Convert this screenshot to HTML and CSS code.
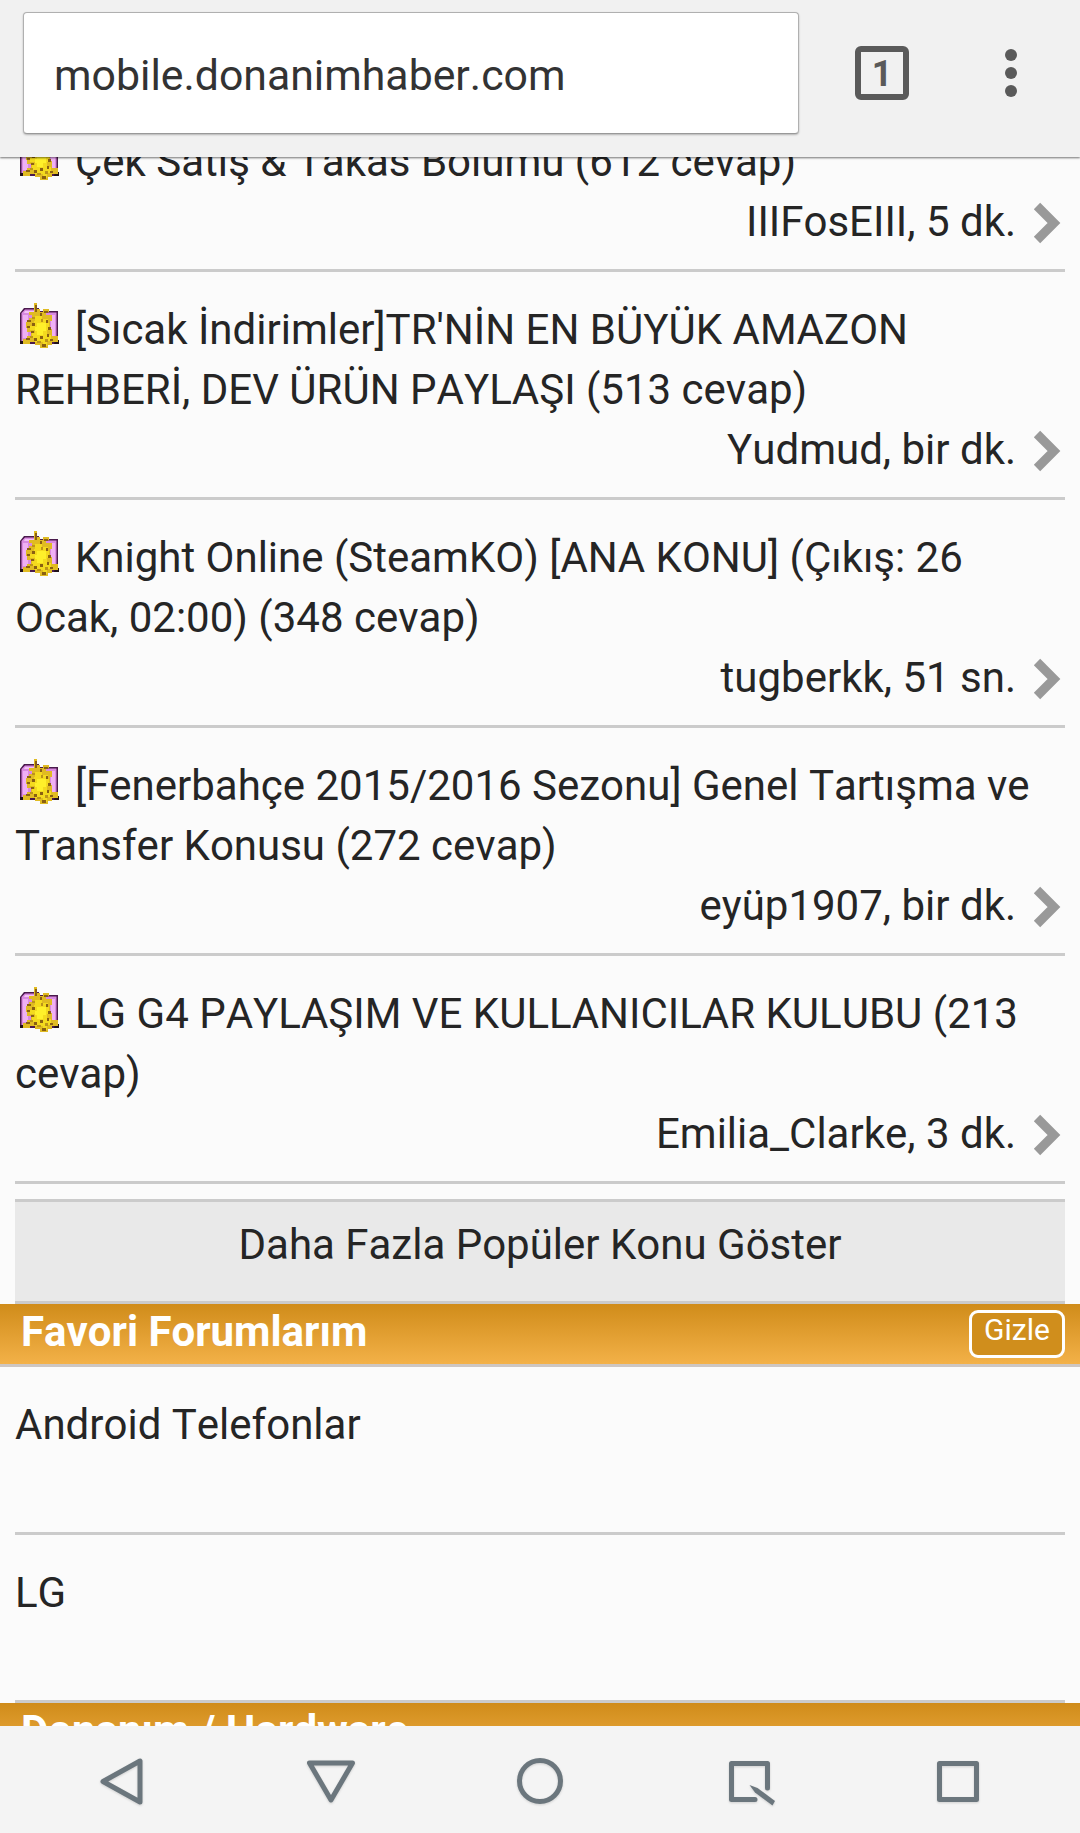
FILE: index.html
```html
<!DOCTYPE html>
<html lang="tr">
  <head>
    <meta charset="UTF-8" />
    <meta name="viewport" content="width=device-width, initial-scale=1.0" />
    <title>DonanımHaber Mobil</title>
    <link rel="stylesheet" href="styles.css" />
  </head>
  <body>
    <!-- Shared icons -->
    <svg class="icon-defs" width="0" height="0">
      <symbol id="hot" viewBox="0 0 45 50">
        <path d="M5 13l4-5h15v3h19v32h-3v1H5z" fill="#4a1a4c" />
        <path d="M6.500 13L10 9.500h13v3h18.500V41h-35z" fill="#d98ae0" />
        <path d="M8 15h5v23H8zM36 15h4v23h-4z" fill="#efb0f4" />
        <path d="M10 11h12v2H9z" fill="#f3c2f6" />
        <path d="M40 40h4v4h-5zM5 41h5v3H5z" fill="#201018" />
        <path d="M19 3h3v6h3v3h3V9h6v3h-3v3h6v6h-2v8h2v7h6v6h-6v3h-4v3h-8v-3h-5v-3h-5v2H8v-5h4v-3h4v-4h-4v-4h-1v-6h3v-4h3v-3h-3v-3h5z" fill="#e0bb22" />
        <path d="M20 16h7v3h6v4h1v7h-2v5h4v6h-4v5h-4v-4h-8v-4h-3v-5h3v-3h-5v-4h4v-5h1z" fill="#f4da1e" />
        <path d="M22 23h9v8h-3v4h-6v-4h-2v-4h2z" fill="#fff02a" />
        <g fill="#8a6012">
          <path d="M20 5h2v7h-2zM29 11h4v2h-4zM25 13h2v3h-2zM12 20h4v2h-4zM17 23h3v3h-3zM12 26h3v2h-3z" />
          <path d="M33 27h3v3h-3zM31 20h2v3h-2zM16 31h3v2h-3zM11 38h4v2h-4zM19 38h3v3h-3zM25 36h3v3h-3zM32 34h2v3h-2zM27 44h4v3h-4zM35 39h3v2h-3z" />
        </g>
        <path d="M17 17h3v2h-3zM22 41h4v2h-4zM30 39h3v3h-3zM15 36h3v2h-3zM26 19h2v3h-2z" fill="#bd941a" />
      </symbol>
      <symbol id="arrow" viewBox="0 0 30 46">
        <path d="M5 6l17 17L5 40" fill="none" stroke="#999" stroke-width="9" stroke-linejoin="miter" />
      </symbol>
    </svg>

    <div class="screen">
      <header class="toolbar">
        <div class="url">mobile.donanimhaber.com</div>
        <div class="tabs">1</div>
        <div class="menu"><i></i><i></i><i></i></div>
      </header>

      <main class="page">
        <!-- Popüler konular -->
        <div class="topic first">
          <div class="title"><svg class="hot"><use href="#hot" /></svg> Çek Satış &amp; Takas Bölümü (612 cevap)</div>
          <div class="meta">IIIFosEIII, 5 dk.<svg class="arrow"><use href="#arrow" /></svg></div>
        </div>
        <div class="topic">
          <div class="title"><svg class="hot"><use href="#hot" /></svg> [Sıcak İndirimler]TR'NİN EN BÜYÜK AMAZON<br />REHBERİ, DEV ÜRÜN PAYLAŞI (513 cevap)</div>
          <div class="meta">Yudmud, bir dk.<svg class="arrow"><use href="#arrow" /></svg></div>
        </div>
        <div class="topic">
          <div class="title"><svg class="hot"><use href="#hot" /></svg> Knight Online (SteamKO) [ANA KONU] (Çıkış: 26<br />Ocak, 02:00) (348 cevap)</div>
          <div class="meta">tugberkk, 51 sn.<svg class="arrow"><use href="#arrow" /></svg></div>
        </div>
        <div class="topic">
          <div class="title"><svg class="hot"><use href="#hot" /></svg> [Fenerbahçe 2015/2016 Sezonu] Genel Tartışma ve<br />Transfer Konusu (272 cevap)</div>
          <div class="meta">eyüp1907, bir dk.<svg class="arrow"><use href="#arrow" /></svg></div>
        </div>
        <div class="topic">
          <div class="title"><svg class="hot"><use href="#hot" /></svg> LG G4 PAYLAŞIM VE KULLANICILAR KULUBU (213<br />cevap)</div>
          <div class="meta">Emilia_Clarke, 3 dk.<svg class="arrow"><use href="#arrow" /></svg></div>
        </div>
        <div class="more">Daha Fazla Popüler Konu Göster</div>

        <!-- Favori forumlar -->
        <div class="section">
          <h2>Favori Forumlarım</h2>
          <span class="hide-btn">Gizle</span>
        </div>
        <div class="forum">Android Telefonlar</div>
        <div class="forum">LG</div>

        <div class="section">
          <h2>Donanım / Hardware</h2>
        </div>
      </main>

      <nav class="navbar">
        <svg viewBox="0 0 60 60"><path d="M48 10v41L11 30.500z" /></svg>
        <svg viewBox="0 0 60 60"><path d="M8.500 12h43L30 49z" /></svg>
        <svg viewBox="0 0 60 60"><circle cx="30" cy="30" r="20.500" /></svg>
        <svg viewBox="0 0 60 60">
          <path d="M36 48.500H12.500v-36h36V37" />
          <path class="pen" d="M30.500 34l8 3 17.500 13-2.500 4.500L36 41.500z" />
        </svg>
        <svg viewBox="0 0 60 60"><path d="M11.500 12.500h37v36h-37z" /></svg>
      </nav>
    </div>
  </body>
</html>
```

FILE: styles.css
```css
* {
  box-sizing: border-box;
  margin: 0;
  padding: 0;
}

body {
  font-family: Roboto, "Noto Sans", sans-serif;
  font-size: 42px;
  font-kerning: none;
  line-height: 60px;
  color: #252525;
  background-color: #fbfbfb;
}

.icon-defs {
  display: block;
}

.screen {
  display: flex;
  flex-direction: column;
  height: 1833px;
  overflow: hidden;
}

/* Browser bar */
.toolbar {
  position: relative;
  z-index: 1;
  display: flex;
  flex: none;
  align-items: flex-start;
  height: 157px;
  padding: 12px 0 0 23px;
  background-color: #f1f1f1;
  box-shadow: 0 1px 2px rgba(0, 0, 0, 0.55);
}

.url {
  width: 776px;
  height: 122px;
  padding-left: 30px;
  font-size: 42.8px;
  line-height: 125px;
  color: #333;
  background-color: #fff;
  border: 1px solid #b0b0b0;
  border-bottom-color: #999;
  border-radius: 4px;
  box-shadow: 0 1px 2px rgba(0, 0, 0, 0.25);
}

.tabs {
  width: 54px;
  height: 54px;
  margin: 34px 0 0 56px;
  border: 6px solid #5a5a5a;
  border-radius: 6px;
  font-size: 36px;
  font-weight: 700;
  line-height: 44px;
  text-align: center;
  color: #5a5a5a;
}

.menu {
  display: flex;
  flex-direction: column;
  gap: 6px;
  margin: 37px 0 0 96px;
}

.menu i {
  width: 12px;
  height: 12px;
  border-radius: 50%;
  background-color: #5a5a5a;
}

/* Page */
.page {
  flex: 1;
  min-height: 0;
  overflow: hidden;
}

.topic {
  height: 228px;
  margin: 0 15px;
  padding-top: 28px;
  border-bottom: 3px solid #cbcbcb;
}

.topic.first {
  height: 168px;
  margin-top: -53px;
}

.title {
  white-space: nowrap;
}

.hot {
  width: 45px;
  height: 50px;
  margin-right: 4.5px;
  vertical-align: -6px;
}

.meta {
  display: flex;
  justify-content: flex-end;
  align-items: flex-start;
}

.arrow {
  width: 30px;
  height: 46px;
  margin: 8px 3px 0 16px;
}

.more {
  height: 105px;
  margin: 15px 15px 0;
  padding-top: 13px;
  text-align: center;
  background-color: #e9e9e9;
  border-top: 3px solid #cbcbcb;
  border-bottom: 3px solid #cbcbcb;
}

.section {
  display: flex;
  justify-content: space-between;
  height: 63px;
  padding: 0 15px 0 21px;
  color: #fff;
  background: linear-gradient(#d08c1a, #f3b148) padding-box;
  border-bottom: 3px solid #cdc6c2;
}

.section h2 {
  font-size: 42px;
  line-height: 55px;
}

.hide-btn {
  width: 96px;
  height: 48px;
  margin-top: 6px;
  border: 3px solid #fff;
  border-radius: 9px;
  font-size: 30px;
  line-height: 34px;
  text-align: center;
  background-color: #d08e1c;
}

.forum {
  height: 168px;
  margin: 0 15px;
  padding-top: 28px;
  border-bottom: 3px solid #cbcbcb;
}

/* System buttons */
.navbar {
  display: flex;
  flex: none;
  justify-content: space-around;
  height: 107px;
  padding: 25px 17px 0;
  background-color: #f4f4f4;
}

.navbar svg {
  width: 60px;
  height: 60px;
  fill: none;
  stroke: #6b767d;
  stroke-width: 5;
  stroke-linejoin: round;
  stroke-linecap: round;
  filter: drop-shadow(0 1px 1px rgba(0, 0, 0, 0.15));
}

.navbar .pen {
  fill: #6b767d;
  stroke: none;
}
```
